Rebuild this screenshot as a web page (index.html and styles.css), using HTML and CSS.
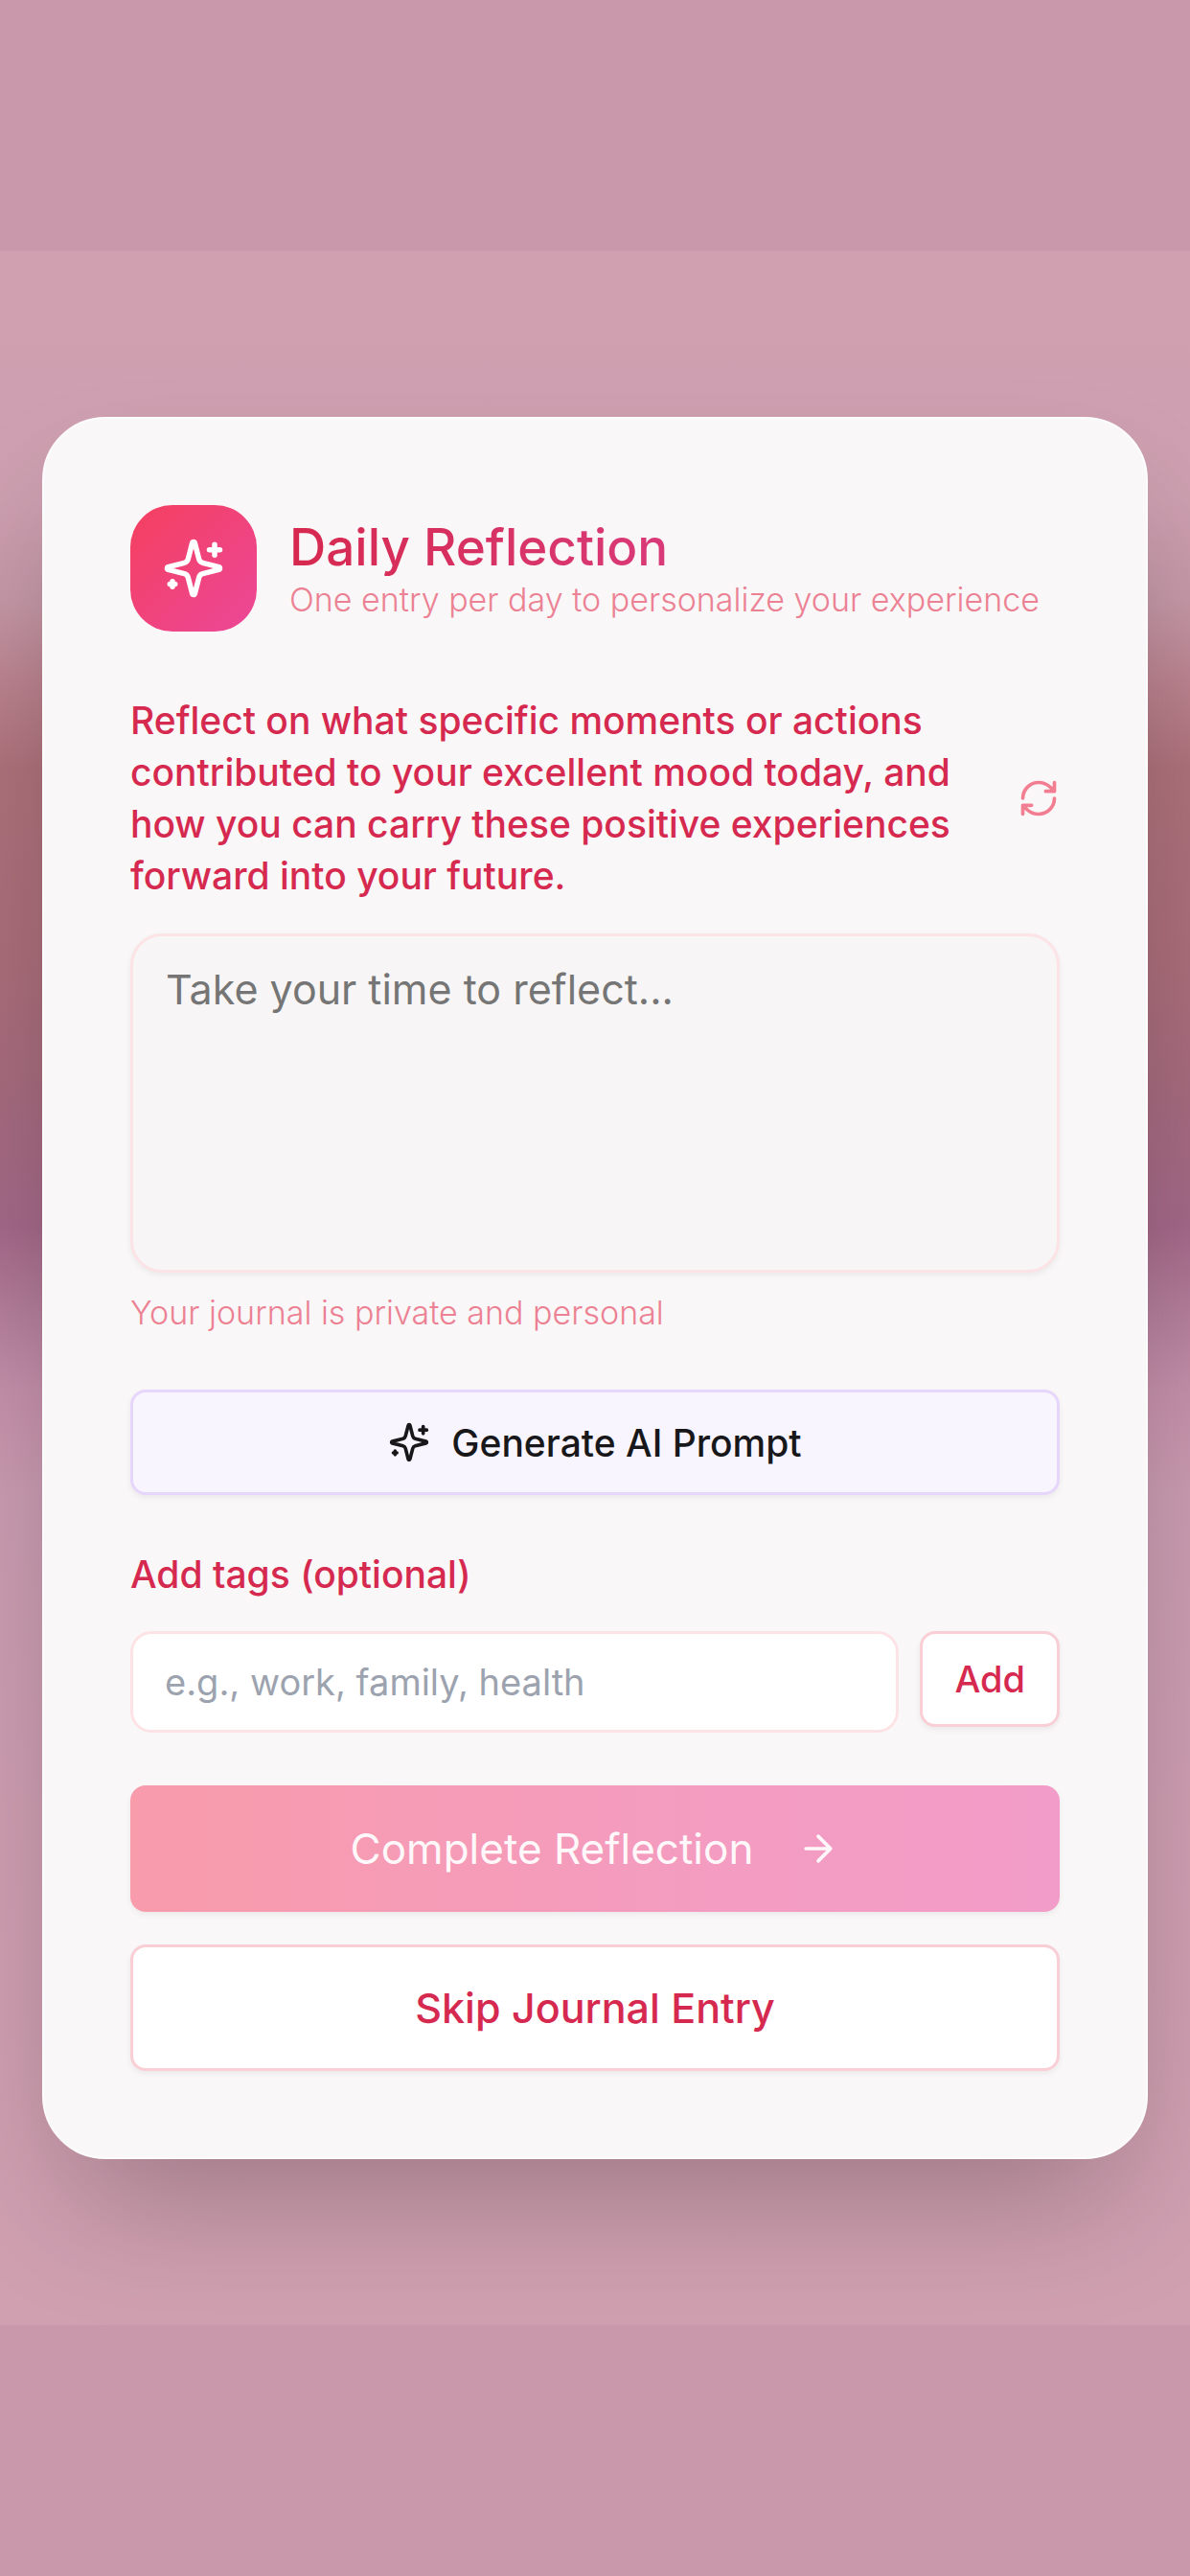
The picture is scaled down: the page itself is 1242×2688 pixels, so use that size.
FILE: index.html
```html
<!DOCTYPE html>
<html lang="en">
<head>
<meta charset="utf-8">
<meta name="viewport" content="width=device-width, initial-scale=1">
<title>Daily Reflection</title>
<link rel="stylesheet" href="styles.css">
</head>
<body>
<svg class="sprite" aria-hidden="true">
  <symbol id="sparkles" viewBox="0 0 24 24">
    <path d="M9.937 15.5A2 2 0 0 0 8.5 14.063l-6.135-1.582a.5.5 0 0 1 0-.962L8.5 9.936A2 2 0 0 0 9.937 8.5l1.582-6.135a.5.5 0 0 1 .963 0L14.063 8.5A2 2 0 0 0 15.5 9.937l6.135 1.581a.5.5 0 0 1 0 .964L15.5 14.063a2 2 0 0 0-1.437 1.437l-1.582 6.135a.5.5 0 0 1-.963 0z"/>
    <path d="M20 3v4M22 5h-4M4 17v2M5 18H3"/>
  </symbol>
</svg>
<main class="backdrop">
  <form class="card">
    <header class="header">
      <div class="badge"><svg class="icon icon-lg" aria-hidden="true"><use href="#sparkles"/></svg></div>
      <div class="heading">
        <h1 class="title">Daily Reflection</h1>
        <p class="subtitle">One entry per day to personalize your experience</p>
      </div>
    </header>

    <div class="prompt">
      <label class="label prompt-text" for="entry">Reflect on what specific moments or actions contributed to your excellent mood today, and how you can carry these positive experiences forward into your future.</label>
      <button class="refresh" type="button" aria-label="New prompt">
        <svg class="icon" viewBox="0 0 24 24" aria-hidden="true"><path d="M3 12a9 9 0 0 1 9-9 9.75 9.75 0 0 1 6.74 2.74L21 8M21 3v5h-5M21 12a9 9 0 0 1-9 9 9.75 9.75 0 0 1-6.74-2.74L3 16M8 16H3v5"/></svg>
      </button>
    </div>
    <textarea class="entry" id="entry" placeholder="Take your time to reflect..."></textarea>
    <p class="note">Your journal is private and personal</p>

    <button class="btn btn-generate" type="button">
      <svg class="icon" aria-hidden="true"><use href="#sparkles"/></svg>
      Generate AI Prompt
    </button>

    <label class="label" for="tags">Add tags (optional)</label>
    <div class="tags">
      <input class="tag-input" id="tags" type="text" placeholder="e.g., work, family, health">
      <button class="btn btn-add" type="button">Add</button>
    </div>

    <div class="actions">
      <button class="btn btn-complete" type="submit">
        Complete Reflection
        <svg class="icon" viewBox="0 0 24 24" aria-hidden="true"><path d="M5 12h14M12 5l7 7-7 7"/></svg>
      </button>
      <button class="btn btn-skip" type="button">Skip Journal Entry</button>
    </div>
  </form>
</main>
</body>
</html>
```
FILE: styles.css
```css
*, *::before, *::after { box-sizing: border-box; }

body {
  margin: 0;
  min-height: 100vh;
  padding: 262px 0;
  display: flex;
  flex-direction: column;
  background: #c999ab;
  font-family: Inter, "Liberation Sans", sans-serif;
  color: #d6294f;
}

h1, p { margin: 0; }

button, input, textarea { font: inherit; color: inherit; }

.sprite { position: absolute; width: 0; height: 0; }

.backdrop {
  flex: 1;
  display: flex;
  flex-direction: column;
  justify-content: center;
  padding: 0 44px;
  overflow: hidden;
  background: linear-gradient(#d0a0b0 0%, #cd9fb0 12%, #c597a6 17%, #ba828e 21%, #ad717a 25%, #a96d7a 35%, #a56a7e 41%, #a36888 47%, #b37d9a 51%, #c490aa 55%, #ca9bb1 60%, #cd9db0 75%, #d0a0b0 100%);
}

.card {
  display: flex;
  flex-direction: column;
  padding: 90px;
  border: 2px solid #fdfcfd;
  border-radius: 66px;
  background: #f9f7f8;
  box-shadow: 0 69px 138px -33px rgba(0, 0, 0, .25);
}

.icon {
  flex: none;
  width: 44px;
  height: 44px;
  fill: none;
  stroke: currentColor;
  stroke-width: 2;
  stroke-linecap: round;
  stroke-linejoin: round;
}
.icon-lg { width: 66px; height: 66px; }

.header { display: flex; align-items: center; gap: 34px; }
.badge {
  flex: none;
  display: grid;
  place-items: center;
  width: 132px;
  height: 132px;
  border-radius: 44px;
  background: linear-gradient(135deg, #f43f5e, #ec4899);
  color: #fff;
}
.title {
  width: fit-content;
  font-size: 53px;
  line-height: 66px;
  font-weight: 500;
  background: linear-gradient(90deg, #d6294f, #d93a78);
  background-clip: text;
  color: transparent;
}
.subtitle, .note {
  font-size: 34px;
  line-height: 44px;
  font-weight: 300;
  color: #ec8193;
}

.label { font-size: 39px; line-height: 54px; font-weight: 500; }

.prompt {
  display: flex;
  align-items: center;
  justify-content: space-between;
  gap: 44px;
  margin: 66px 0 33px;
}
.prompt-text { max-width: 880px; }
.refresh {
  display: flex;
  padding: 0;
  border: 0;
  background: none;
  color: #f27e91;
}

.entry {
  height: 354px;
  padding: 28px 34px;
  border: 3px solid #fbe3e6;
  border-radius: 33px;
  background: #f8f5f6;
  box-shadow: 0 3px 6px rgba(0, 0, 0, .06);
  font-size: 43px;
  line-height: 54px;
  resize: none;
}
.entry::placeholder { color: #757575; opacity: 1; }
.note { margin: 20px 0 58px; }

.btn {
  display: flex;
  align-items: center;
  justify-content: center;
  gap: 22px;
  padding: 0 33px;
  border: 3px solid #f9ced5;
  border-radius: 16px;
  background: #fff;
  box-shadow: 0 3px 6px rgba(0, 0, 0, .06);
  font-size: 39px;
  font-weight: 500;
  white-space: nowrap;
}
.btn-generate {
  height: 110px;
  margin-bottom: 56px;
  border-color: #e7d6fb;
  background: #f9f5ff;
  color: #18181b;
}

.tags { display: flex; align-items: flex-start; gap: 22px; margin-top: 32px; }
.tag-input {
  flex: 1;
  min-width: 0;
  height: 106px;
  padding: 0 33px;
  border: 3px solid #fde3e6;
  border-radius: 22px;
  background: #fff;
  font-size: 38px;
}
.tag-input::placeholder { color: #9ca3af; opacity: 1; }
.btn-add { height: 100px; font-size: 38px; }

.actions { display: grid; gap: 34px; margin-top: 55px; }
.btn-complete, .btn-skip { height: 132px; font-size: 44px; }
.btn-complete {
  gap: 46px;
  border: 0;
  background: linear-gradient(90deg, #f89bab, #f49cc0 60%, #f29dc9);
  color: #fff8fb;
  font-weight: 400;
}
.btn-skip { font-size: 43px; }
```
